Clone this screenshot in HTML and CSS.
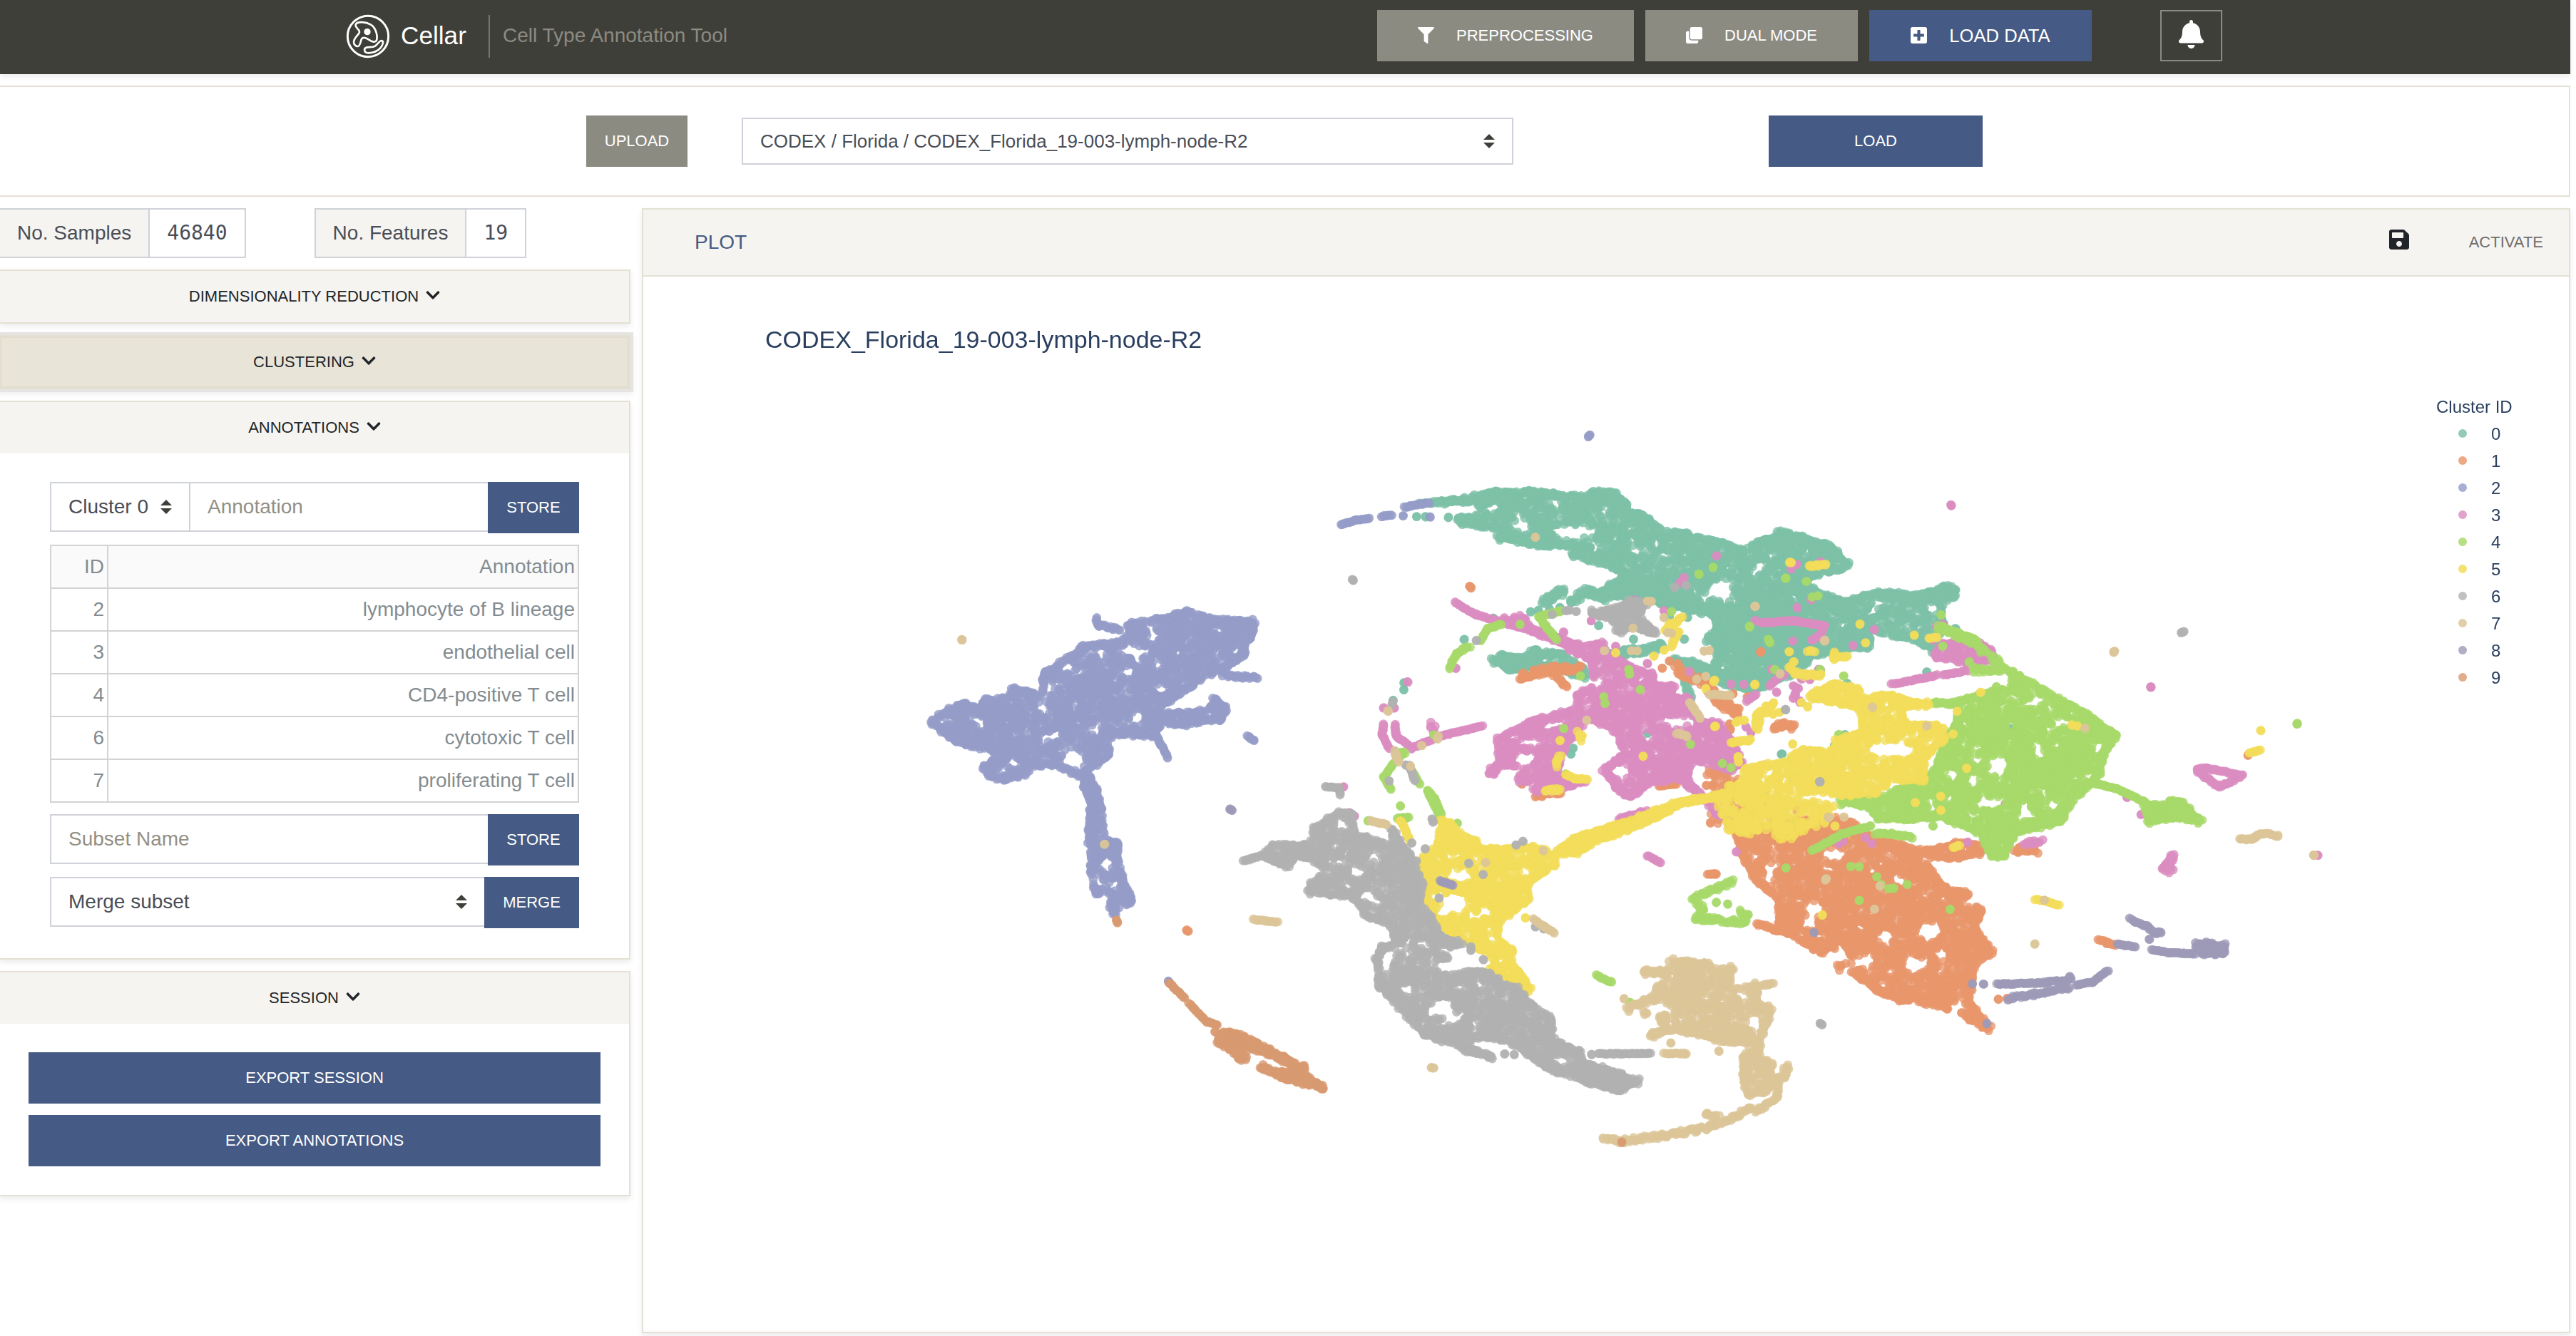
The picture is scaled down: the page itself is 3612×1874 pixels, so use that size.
FILE: index.html
```html
<!DOCTYPE html>
<html lang="en">
<head>
<meta charset="utf-8">
<title>Cellar</title>
<link rel="stylesheet" href="styles.css">
</head>
<body>
<svg class="defs" width="0" height="0">
  <symbol id="chevron" viewBox="0 0 448 512"><path d="M207.029 381.476L12.686 187.132c-9.373-9.373-9.373-24.569 0-33.941l22.667-22.667c9.357-9.357 24.522-9.375 33.901-.04L224 284.505l154.745-154.021c9.379-9.335 24.544-9.317 33.901.04l22.667 22.667c9.373 9.373 9.373 24.569 0 33.941L240.971 381.476c-9.373 9.372-24.569 9.372-33.942 0z"/></symbol>
  <symbol id="updown" viewBox="0 0 16 20"><path d="M8 0L16 8H0zM0 12H16L8 20z"/></symbol>
</svg>
<div class="app">
  <header class="navbar">
    <svg class="logo" viewBox="0 0 240 240" fill="none" stroke="#fff" stroke-linecap="round" stroke-linejoin="round">
      <circle cx="120" cy="117" r="86" stroke-width="9"/>
      <path stroke-width="8" d="M68 68C72 54 108 54 132 68C152 80 162 112 156 134C150 146 134 138 122 130C108 120 96 120 92 130C88 144 86 158 78 159C66 160 58 148 61 136C64 120 84 108 84 98C84 86 66 84 68 68Z"/>
      <path stroke-width="8" d="M112 164C124 160 138 166 150 158C162 148 170 134 178 135C188 138 182 154 172 166C160 180 140 186 122 187C102 187 102 168 112 164Z"/>
      <circle cx="117" cy="98" r="14" fill="#fff" stroke="none"/>
    </svg>
    <span class="brand">Cellar</span>
    <span class="tagline">Cell Type Annotation Tool</span>
    <nav class="actions">
      <button class="btn grey preprocessing"><svg viewBox="0 0 512 512"><path d="M487.976 0H24.028C2.71 0-8.047 25.866 7.058 40.971L192 225.941V432c0 7.831 3.821 15.17 10.237 19.662l80 55.98C298.02 518.69 320 507.493 320 487.98V225.941l184.947-184.97C520.021 25.896 509.338 0 487.976 0z"/></svg><span>PREPROCESSING</span></button>
      <button class="btn grey dual"><svg viewBox="0 0 512 512"><path d="M464 0c26.51 0 48 21.49 48 48v288c0 26.51-21.49 48-48 48H176c-26.51 0-48-21.49-48-48V48c0-26.51 21.49-48 48-48h288M176 416c-44.112 0-80-35.888-80-80V128H48c-26.51 0-48 21.49-48 48v288c0 26.51 21.49 48 48 48h288c26.51 0 48-21.49 48-48v-48H176z"/></svg><span>DUAL MODE</span></button>
      <button class="btn blue loaddata"><svg viewBox="0 32 448 448"><path d="M400 32H48C21.5 32 0 53.5 0 80v352c0 26.5 21.5 48 48 48h352c26.5 0 48-21.5 48-48V80c0-26.500-21.500-48-48-48zm-32 252c0 6.600-5.400 12-12 12h-92v92c0 6.600-5.400 12-12 12h-56c-6.600 0-12-5.400-12-12v-92H92c-6.600 0-12-5.400-12-12v-56c0-6.600 5.400-12 12-12h92v-92c0-6.600 5.400-12 12-12h56c6.600 0 12 5.400 12 12v92h92c6.600 0 12 5.400 12 12v56z"/></svg><span>LOAD DATA</span></button>
    </nav>
    <button class="btn bell"><svg viewBox="0 0 448 512"><path d="M224 512c35.320 0 63.970-28.650 63.970-64H160.030c0 35.350 28.650 64 63.970 64zm215.390-149.710c-19.320-20.760-55.470-51.990-55.470-154.290 0-77.700-54.480-139.900-127.940-155.160V32c0-17.670-14.320-32-31.980-32s-31.980 14.330-31.980 32v20.840C118.560 68.100 64.080 130.300 64.080 208c0 102.300-36.150 133.530-55.470 154.290-6 6.450-8.660 14.160-8.610 21.710.11 16.400 12.980 32 32.100 32h383.800c19.120 0 32-15.600 32.100-32 .05-7.550-2.610-15.270-8.610-21.710z"/></svg></button>
  </header>

  <section class="loader">
    <button class="btn grey upload">UPLOAD</button>
    <div class="select dataset"><span>CODEX / Florida / CODEX_Florida_19-003-lymph-node-R2</span><svg><use href="#updown"/></svg></div>
    <button class="btn blue load">LOAD</button>
  </section>

  <main class="columns">
    <aside class="sidebar">
      <div class="counts">
        <div class="count first"><span class="label">No. Samples</span><span class="value">46840</span></div>
        <div class="count"><span class="label">No. Features</span><span class="value">19</span></div>
      </div>
      <section class="card"><h2>DIMENSIONALITY REDUCTION<svg><use href="#chevron"/></svg></h2></section>
      <section class="card active"><h2>CLUSTERING<svg><use href="#chevron"/></svg></h2></section>
      <section class="card">
        <h2>ANNOTATIONS<svg><use href="#chevron"/></svg></h2>
        <div class="form">
          <div class="group">
            <div class="select cluster"><span>Cluster 0</span><svg><use href="#updown"/></svg></div>
            <div class="input joined">Annotation</div>
            <button class="btn blue">STORE</button>
          </div>
          <table>
            <tr><th class="id">ID</th><th>Annotation</th></tr>
            <tr><td>2</td><td>lymphocyte of B lineage</td></tr>
            <tr><td>3</td><td>endothelial cell</td></tr>
            <tr><td>4</td><td>CD4-positive T cell</td></tr>
            <tr><td>6</td><td>cytotoxic T cell</td></tr>
            <tr><td>7</td><td>proliferating T cell</td></tr>
          </table>
          <div class="group">
            <div class="input">Subset Name</div>
            <button class="btn blue">STORE</button>
          </div>
          <div class="group">
            <div class="select merge"><span>Merge subset</span><svg><use href="#updown"/></svg></div>
            <button class="btn blue wide">MERGE</button>
          </div>
        </div>
      </section>
      <section class="card">
        <h2>SESSION<svg><use href="#chevron"/></svg></h2>
        <div class="exports">
          <button class="btn blue">EXPORT SESSION</button>
          <button class="btn blue">EXPORT ANNOTATIONS</button>
        </div>
      </section>
    </aside>

    <section class="plot">
      <div class="plot-head">
        <span class="plot-name">PLOT</span>
        <svg class="save" viewBox="0 0 448 512"><path d="M433.941 129.941l-83.882-83.882A48 48 0 0 0 316.118 32H48C21.490 32 0 53.490 0 80v352c0 26.510 21.490 48 48 48h352c26.510 0 48-21.490 48-48V163.882a48 48 0 0 0-14.059-33.941zM224 416c-35.346 0-64-28.654-64-64 0-35.346 28.654-64 64-64s64 28.654 64 64c0 35.346-28.654 64-64 64zm96-304.520V212c0 6.627-5.373 12-12 12H76c-6.627 0-12-5.373-12-12V108c0-6.627 5.373-12 12-12h228.520c3.183 0 6.235 1.264 8.485 3.515l3.480 3.480A11.996 11.996 0 0 1 320 111.480z"/></svg>
        <span class="activate">ACTIVATE</span>
      </div>
      <div class="plot-body">
        <canvas id="scatter" width="2700" height="1480"></canvas>
        <div class="title">CODEX_Florida_19-003-lymph-node-R2</div>
        <div class="legend">
          <div class="legend-title">Cluster ID</div>
          <div class="item"><i class="c0"></i>0</div>
          <div class="item"><i class="c1"></i>1</div>
          <div class="item"><i class="c2"></i>2</div>
          <div class="item"><i class="c3"></i>3</div>
          <div class="item"><i class="c4"></i>4</div>
          <div class="item"><i class="c5"></i>5</div>
          <div class="item"><i class="c6"></i>6</div>
          <div class="item"><i class="c7"></i>7</div>
          <div class="item"><i class="c8"></i>8</div>
          <div class="item"><i class="c9"></i>9</div>
        </div>
      </div>
    </section>
  </main>
</div>
<script src="scatter.js"></script>
</body>
</html>
```

FILE: styles.css
```css
* { box-sizing: border-box; }
body { margin: 0; background: #fff; font: 28px "Liberation Sans", Arial, sans-serif; color: #212529; overflow: hidden; }
svg { display: block; fill: currentColor; }
.defs { position: absolute; }
.app { width: 3604px; height: 1874px; }

.btn { border: 0; border-radius: 0; height: 72px; padding: 0; font: 22px "Liberation Sans", Arial, sans-serif; color: #fff; display: flex; align-items: center; justify-content: center; flex: none; }
.grey { background: #8c8b82; }
.blue { background: #455a84; }

.navbar { height: 104px; padding: 0 488px 4px 476px; background: #3f3f3a; display: flex; align-items: center; box-shadow: 0 4px 8px rgba(0, 0, 0, .08); }
.logo { width: 80px; height: 80px; margin-top: 4px; fill: none; }
.brand { font-size: 35.2px; color: #fff; margin-left: 6px; width: 123px; }
.tagline { height: 60px; line-height: 58px; margin-top: 2px; padding-left: 18px; border-left: 2px solid #77766e; color: #8c8b82; white-space: nowrap; }
.actions { display: flex; gap: 16px; margin-left: auto; margin-right: 96px; }
.actions svg { width: 23px; height: 23px; margin-top: -2px; }
.preprocessing { width: 360px; gap: 31px; }
.dual { width: 298px; gap: 31px; }
.loaddata { width: 312px; font-size: 25.6px; gap: 31px; }
.bell { width: 87px; border: 2px solid #8c8b82; background: none; }
.bell svg { width: 35px; height: 40px; margin-top: -4px; }

.loader { margin-top: 16px; height: 156px; border: 2px solid #e4e1d4; border-left: 0; padding: 40px 0 0 822px; display: flex; align-items: flex-start; }
.upload { width: 142px; }
.select { border: 2px solid #cfd2d8; background: #fff; color: #4a4e57; display: flex; align-items: center; justify-content: space-between; padding: 0 24px; white-space: nowrap; }
.select svg { width: 16px; height: 20px; fill: #3f3f3a; flex: none; }
.dataset { width: 1082px; height: 66px; margin: 3px 358px 0 76px; font-size: 26px; }
.load { width: 300px; }

.columns { display: flex; gap: 16px; margin-top: 16px; align-items: flex-start; }
.sidebar { width: 884px; display: flex; flex-direction: column; gap: 16px; }
.counts { display: flex; gap: 96px; height: 70px; }
.count { display: flex; border: 2px solid #cfd2d8; line-height: 66px; color: #4a4e57; }
.count.first { border-left: 0; }
.label { background: #f6f4f0; padding: 0 24px; border-right: 2px solid #cfd2d8; }
.value { padding: 0 24px; font-family: "DejaVu Sans Mono", monospace; }
.card { border: 2px solid #e4e1d4; border-left: 0; background: #fff; box-shadow: 0 4px 8px rgba(0, 0, 0, .08); }
.card h2 { margin: 0; height: 72px; background: #f6f4f0; font-size: 22px; font-weight: 400; display: flex; align-items: center; justify-content: center; gap: 10px; }
.card h2 svg { width: 20px; height: 22px; margin-top: -4px; }
.card.active { height: 76px; box-shadow: 0 0 0 4px #e5e4e2, 0 4px 8px 4px rgba(0, 0, 0, .06); }
.card.active h2 { background: #e8e4d8; border: 2px solid #e2ddcd; }

.form { padding: 40px 70px 42px; display: flex; flex-direction: column; gap: 16px; }
.group { display: flex; align-items: flex-start; height: 72px; }
.group .btn { width: 128px; }
.group .btn.wide { width: 133px; }
.group .select, .input { height: 70px; }
.cluster { width: 197px; }
.merge { flex: 1; border-right: 0; padding-right: 24px; }
.input { flex: 1; border: 2px solid #cfd2d8; border-right: 0; line-height: 66px; padding-left: 24px; color: #938f85; }
.input.joined { border-left: 0; padding-left: 24px; }

table { width: 742px; border-collapse: collapse; table-layout: fixed; color: #848c90; }
th, td { height: 60px; border: 2px solid #d3d3d3; padding: 0 4px 0 0; text-align: right; font-weight: 400; }
th { background: #fafafa; }
th.id { width: 80px; }

.exports { padding: 40px 42px 40px 40px; display: flex; flex-direction: column; gap: 16px; }
.exports .btn { height: 72px; width: 802px; }

.plot { width: 2704px; height: 1578px; border: 2px solid #e4e1d4; box-shadow: 0 4px 8px rgba(0, 0, 0, .08); }
.plot-head { height: 94px; border-bottom: 2px solid #e4e1d4; background: #f6f4f0; display: flex; align-items: center; padding: 0 36px 0 72px; }
.plot-name { color: #455a84; }
.save { width: 28px; height: 32px; margin: -9px 84px 0 auto; color: #212529; }
.activate { font-size: 22px; color: #6f6e6b; }
.plot-body { position: relative; height: 1480px; }
.plot-body canvas { display: block; }
.title { position: absolute; left: 171px; top: 66px; font-size: 34px; line-height: 44px; color: #2a3f5f; white-space: nowrap; }
.legend { position: absolute; left: 2514px; top: 164px; font-size: 24px; color: #2a3f5f; }
.legend-title, .item { height: 38px; line-height: 38px; white-space: nowrap; }
.item { display: flex; align-items: center; padding-left: 31px; gap: 34px; }
.item i { width: 12px; height: 12px; border-radius: 6px; margin-top: -2px; }
.c0 { background: #93cbb6; }
.c1 { background: #eda884; }
.c2 { background: #a9afd3; }
.c3 { background: #e1a3cb; }
.c4 { background: #b7df83; }
.c5 { background: #f3e272; }
.c6 { background: #c1c1c1; }
.c7 { background: #e1cfaa; }
.c8 { background: #b0adc5; }
.c9 { background: #e0ac8b; }
```

FILE: scatter.js
```js
// Draws the embedding: every cluster is a set of areas, trails and single cells.
const ctx = document.getElementById('scatter').getContext('2d');
ctx.translate(-902, -388);

const R = 6.3;
const colors = ['#7dc0a8', '#e9966b', '#959cc8', '#db8dc0', '#a8d96a',
                '#f2dd5a', '#b2b2b2', '#dcc698', '#9e9ab8', '#d89a70'];

// Each tile of the embedding has its own origin and units per pixel.
const tiles = {
  A: [1260, 560, 1.96, 1.96],
  B: [1800, 560, 1.96, 2.613],
  C: [2400, 640, 1.742, 1.823],
  D: [1600, 1040, 1.568, 2.529]
};

let seed = 12345;
function rnd() {
  seed = (seed * 1664525 + 1013904223) >>> 0;
  return seed / 4294967296;
}

function points(tile, text) {
  const [ox, oy, sx, sy] = tiles[tile];
  return text.trim().split(/\s+/).map(p => {
    const [u, v] = p.split(',').map(Number);
    return [ox + u / sx, oy + v / sy];
  });
}

let color = 0;
function dot(x, y) {
  ctx.globalAlpha = 0.8;
  ctx.fillStyle = colors[color];
  ctx.beginPath();
  ctx.arc(x, y, R, 0, Math.PI * 2);
  ctx.fill();
}

function inside(poly, x, y) {
  let hit = false;
  for (let i = 0, j = poly.length - 1; i < poly.length; j = i++) {
    const [xi, yi] = poly[i], [xj, yj] = poly[j];
    if ((yi > y) !== (yj > y) && x < (xj - xi) * (y - yi) / (yj - yi) + xi) hit = !hit;
  }
  return hit;
}

// spacing: px² per cell; holes: "x,y,rx,ry" in tile units
function area(tile, text, spacing = 30, holes = '') {
  const poly = points(tile, text);
  const [ox, oy, sx, sy] = tiles[tile];
  const gaps = holes.trim() ? holes.trim().split(/\s+/).map(h => {
    const [u, v, a, b] = h.split(',').map(Number);
    return [ox + u / sx, oy + v / sy, a / sx + 4, b / sy + 4];
  }) : [];
  const blocked = (x, y) => gaps.some(g => ((x - g[0]) / g[2]) ** 2 + ((y - g[1]) / g[3]) ** 2 < 1);
  const xs = poly.map(p => p[0]), ys = poly.map(p => p[1]);
  const x0 = Math.min(...xs), x1 = Math.max(...xs), y0 = Math.min(...ys), y1 = Math.max(...ys);
  const n = (x1 - x0) * (y1 - y0) / spacing;
  const e = 4;
  for (let i = 0; i < n; i++) {
    const x = x0 + rnd() * (x1 - x0), y = y0 + rnd() * (y1 - y0);
    if (!inside(poly, x - e, y) || !inside(poly, x + e, y) ||
        !inside(poly, x, y - e) || !inside(poly, x, y + e) || blocked(x, y)) continue;
    dot(x, y);
  }
  if (spacing > 45) return;
  // dense areas have a closed rim
  for (let i = 0; i < poly.length; i++) {
    const [xa, ya] = poly[i], [xb, yb] = poly[(i + 1) % poly.length];
    const len = Math.hypot(xb - xa, yb - ya);
    if (!len) continue;
    let nx = -(yb - ya) / len, ny = (xb - xa) / len;
    if (!inside(poly, (xa + xb) / 2 + nx * 3, (ya + yb) / 2 + ny * 3)) { nx = -nx; ny = -ny; }
    for (let d = 2; d < len - 1; d += 3.5) {
      const off = 5.5 + rnd() * 2.5;
      const x = xa + (xb - xa) * d / len + nx * off, y = ya + (yb - ya) * d / len + ny * off;
      if (rnd() < .85 && inside(poly, x, y) && !blocked(x, y)) dot(x, y);
    }
  }
}

// A narrow band of cells, width in px
function trail(tile, text, width = 14) {
  const line = points(tile, text);
  const s = Math.max(1.5, width + 2.5 - 2 * R);
  for (let i = 1; i < line.length; i++) {
    const [xa, ya] = line[i - 1], [xb, yb] = line[i];
    const n = Math.ceil(Math.hypot(xb - xa, yb - ya) / (s > 6 ? 1.1 : 2.2));
    for (let k = 0; k <= n; k++) {
      const t = k / n;
      dot(xa + (xb - xa) * t + (rnd() - .5) * s, ya + (yb - ya) * t + (rnd() - .5) * s);
    }
  }
}

function cells(tile, text) {
  points(tile, text).forEach(([x, y]) => { dot(x, y); dot(x + rnd() * 2 - 1, y + rnd() * 2 - 1); });
}

// ---- cluster 0
color = 0;
area('B', '375,385 480,355 560,325 690,322 830,345 840,325 905,322 955,380 955,405 985,408 1050,468 1100,473 1130,492 1190,502 1270,540 1300,505 1345,495 1355,468 1440,493 1510,528 1565,605 1548,632 1480,652 1440,670 1450,720 1500,740 1500,930 1400,960 1340,1060 1280,1080 1190,1050 1100,990 1040,940 1120,945 1230,1000 1260,960 1150,880 1190,830 1140,770 1100,750 1000,740 930,730 870,750 860,700 920,640 870,620 830,600 780,575 800,550 720,555 640,535 575,515 590,490 480,468 472,425 540,410 520,390',
  24, '800,485,60,12 650,460,25,5 1200,700,28,28 1050,573,18,5 1310,615,8,18 570,400,20,5 970,555,12,5 1410,725,8,6 1180,920,25,14 745,378,8,8');
area('B', '880,690 960,660 1100,690 1170,790 1130,790 1060,770 990,745 900,735', 26);
area('B', '1420,650 1480,700 1568,735 1568,780 1440,780 1390,700', 34);
trail('B', '715,740 770,705', 20);
trail('B', '790,745 830,705 880,720', 20);
area('B', '560,960 600,922 660,930 690,900 720,915 770,915 800,950 830,970 840,1025 800,1025 700,990 620,1010', 30);
trail('B', '880,945 960,925 1040,905', 20);
trail('B', '1095,1000 1110,1060 1120,1110', 16);
cells('B', '865,830 962,880 497,880 577,803 700,775 680,780 730,770 760,765 330,1040 330,1065 300,1105 305,1290 790,1300 795,1280 365,430 390,432 453,432 480,435 1100,880 1370,1300 1000,1225 1130,1435 1110,800 930,640 1060,800 1045,745');
trail('B', '375,383 480,370', 13);
area('C', '240,345 310,370 360,350 410,335 500,345 580,320 607,340 600,370 572,382 575,430 550,510 480,475 400,460 390,500 330,500 250,520 200,570 120,600 50,580 0,560 0,380 240,380', 30,
  '68,440,12,22 240,400,6,8 410,375,12,4 540,395,8,5 30,470,10,6');
cells('C', '730,697 170,762 300,740 325,712 330,580 595,440 525,552');

// ---- cluster 1
color = 1;
area('C', '50,965 150,930 200,920 340,925 390,960 470,985 520,1000 610,975 667,990 667,1022 600,1037 530,1037 580,1100 625,1103 670,1165 650,1200 697,1270 650,1312 640,1390 690,1465 670,1475 600,1432 500,1402 460,1402 400,1375 350,1335 298,1312 305,1295 340,1285 310,1250 270,1282 200,1240 155,1217 155,1140 100,1090 65,1020',
  24, '300,1020,24,12 425,1230,14,14 530,1215,24,18 250,1158,20,12 495,1300,22,16 600,1408,18,6 150,1050,18,3 330,1310,10,4 560,1065,12,6 635,1140,12,6 460,1085,12,6 370,1290,24,6 560,1275,12,10 240,1195,14,10');
trail('C', '740,1005 795,1007', 19);
trail('C', '110,1195 165,1215', 14);
trail('C', '270,1242 300,1258', 12);
area('C', '143,690 170,670 205,680 207,700 150,705', 20);
cells('C', '0,1068 10,1068 120,500 1310,765 700,1388 722,1386 965,1245');
trail('C', '945,1235 985,1250', 11);
area('C', '0,780 60,800 120,860 60,900 0,880', 80);
trail('B', '650,1018 740,988 815,985', 19);
trail('B', '740,1005 780,1055', 14);
trail('B', '1075,990 1150,1030 1200,1110 1250,1150', 20);
cells('B', '1040,985 1060,960 1083,970 1225,1190 1228,1210 1235,1080 1275,1090 1310,928 512,686 515,690 655,1410');
area('B', '1150,1340 1230,1340 1265,1400 1220,1440 1150,1440', 46);
trail('B', '1030,1418 1080,1410', 12);
trail('B', '690,1455 765,1440', 14);
area('D', '1230,160 1330,180 1440,200 1568,280 1568,380 1400,380 1300,320 1240,300', 100);
trail('D', '1245,470 1265,470', 11);
cells('D', '1252,290 100,670 104,673');

// ---- cluster 2
color = 2;
area('A', '80,888 118,850 175,824 215,835 240,813 295,808 310,780 385,800 388,745 420,728 505,668 600,658 620,640 622,608 740,588 790,570 870,595 930,595 985,602 982,655 962,670 962,712 905,745 830,782 770,828 720,855 800,848 845,845 868,810 914,848 892,890 780,908 735,900 700,937 620,935 590,930 585,990 530,1025 500,1050 440,1022 400,1015 370,1022 350,1042 290,1059 245,1047 218,1010 265,977 190,964 130,937',
  22, '222,885,12,6 465,738,14,7 645,695,30,9 632,752,10,8 655,880,14,9 480,990,22,18 320,1000,12,5 720,805,7,18 430,925,12,8 395,850,14,6 695,625,7,3 880,635,8,3 120,888,6,5 415,795,5,10 290,1020,8,3 540,910,6,3');
trail('A', '540,605 545,618 605,632', 15);
trail('A', '890,755 920,762 985,767', 15);
trail('A', '700,910 740,985', 11);
trail('A', '640,770 720,820 760,800', 11);
area('A', '495,1020 535,1030 555,1075 572,1140 578,1200 615,1215 614,1270 632,1330 652,1380 640,1400 610,1398 590,1440 573,1400 528,1360 518,1300 518,1240 508,1210 515,1120 498,1060',
  22, '572,1275,12,14 595,1330,6,6 566,1375,7,7 550,1325,5,4');
trail('A', '957,925 978,938', 13);
trail('A', '1215,345 1255,333 1295,327', 10);
trail('A', '1328,322 1355,318', 10);
trail('A', '1390,297 1458,285', 11);
cells('A', '1387,320 1460,323');
cells('B', '837,138 841,132');
cells('D', '60,850 62,857');

// ---- cluster 3
color = 3;
area('B', '590,800 655,778 690,830 760,860 820,890 885,880 895,920 940,955 990,985 1027,1000 1022,1040 1080,1035 1078,1080 1120,1080 1135,1160 1200,1175 1250,1260 1270,1340 1230,1375 1130,1340 1120,1390 1150,1445 1125,1445 1080,1405 1010,1420 960,1468 930,1465 895,1410 865,1350 925,1300 900,1220 840,1185 800,1250 775,1300 765,1380 845,1390 800,1432 720,1455 680,1445 680,1415 635,1405 645,1360 610,1355 570,1390 553,1360 583,1330 575,1240 680,1160 795,1125 795,1080 840,1040 835,960 790,935 740,895 680,865 600,830',
  22, '925,1362,22,18 680,1258,30,9 660,1320,22,20 740,1195,14,9 1080,1180,40,10 1000,1230,6,6 870,1030,8,4');
trail('B', '470,745 530,790 600,818 680,845 770,895', 12);
trail('B', '275,1190 270,1230 290,1280', 11);
trail('B', '305,1190 310,1235 345,1270', 12);
trail('B', '350,1280 420,1240 545,1197', 12);
trail('B', '405,1190 415,1215', 16);
trail('B', '1110,1400 1200,1530', 14);
trail('B', '920,1540 1000,1510', 14);
trail('B', '1310,820 1400,812 1485,830 1475,865 1450,885', 12);
trail('B', '1270,1105 1300,1085', 13);
trail('B', '1335,1050 1360,1020', 11);
cells('B', '473,985 340,1035 275,1130 303,1132 165,1420 180,1515 195,1528 770,855 845,812 1190,573 1100,655 1090,672 965,735 1045,775 1410,605 1395,620 1475,595 1450,735 1412,765 1400,885 1295,810 1230,1045 1265,1045 1355,1075 1400,1050 1405,1080 1420,1110 1470,990 1340,990 1440,1010 1115,1000 912,905 1000,970 1270,1200 1285,1220 1320,1340 1400,1095 1415,1060 1375,1010');
area('C', '535,500 560,470 640,458 692,490 702,530 620,537 540,522', 22);
trail('C', '440,583 550,560', 12);
trail('C', '565,560 625,548', 10);
trail('C', '1185,805 1240,845 1295,818', 14);
trail('C', '1185,800 1210,797 1295,816', 12);
area('C', '1092,1060 1132,1005 1128,1070', 12);
trail('C', '1100,1055 1130,1020', 12);
cells('C', '585,125 586,126 1072,590 1073,591 550,435 565,430 310,990 320,985 375,975 392,990 625,988 60,1012 345,483 398,443 1015,873 1050,915 1480,1020 540,470 718,890 205,590 205,610 215,625 240,570 265,545 220,570');
trail('C', '765,990 805,985', 16);
trail('D', '1113,405 1143,430', 11);

// ---- cluster 4
color = 4;
area('C', '550,430 600,438 650,458 672,500 720,530 800,580 900,638 960,680 1000,715 985,742 967,765 957,815 930,852 892,880 862,942 800,960 747,972 720,1033 680,1033 650,972 560,932 500,938 400,938 380,905 300,890 320,868 420,860 480,830 540,800 555,740 580,690 600,645 538,642 540,618 600,618 690,588 730,588 720,562 632,552 630,540 700,535 640,490 550,450',
  22, '700,790,18,17 680,888,32,10 945,745,8,8 730,690,5,8 860,680,16,6 640,832,12,4 770,918,14,8 650,780,6,8 590,815,12,6 800,625,10,4 800,760,6,4 840,890,5,5');
trail('C', '555,435 600,452 640,470 665,500', 13);
trail('C', '930,835 990,850 1060,885', 11);
area('C', '1045,880 1110,880 1115,870 1145,870 1200,922 1200,945 1130,935 1060,945', 16);
trail('C', '245,1008 320,965 390,945', 12);
trail('C', '400,965 440,965 490,975', 13);
cells('C', '1430,685 1431,684 181,1053 340,1048 360,1050 403,1075 415,1095 432,1106 445,1104 477,1094 360,1136 583,1158 181,312 232,320 245,360 260,357 92,435 138,468 143,477 560,405 322,562 155,545 205,940 225,945 630,525 695,525 565,485 695,590 310,712 540,945 265,545');
trail('D', '1303,495 1215,555 1235,595 1220,635', 15);
trail('D', '1230,628 1330,642 1320,600', 16);
cells('D', '1265,570 1290,578 1335,615 570,228 1075,925 500,280 695,290');
trail('D', '1000,828 1035,855', 12);
trail('D', '565,275 590,268', 13);
trail('D', '630,175 645,200 660,260', 10);
trail('B', '455,985 475,930 510,905', 13);
trail('B', '540,885 560,840 600,825', 12);
trail('B', '765,775 700,797 725,840 750,880', 12);
trail('B', '315,1300 335,1300', 17);
trail('B', '305,1330 275,1385 295,1430', 11);
trail('B', '350,1360 375,1410', 10);
trail('B', '395,1435 430,1530', 10);
cells('B', '1180,615 1142,642 1380,655 650,825 880,1090 883,1115 948,990 950,1008 980,1065 770,1207 1118,1265 1230,1350 1205,1335 1065,780 1280,832 1335,888 815,1015 412,1230 775,1375 1475,1000 1325,1450');

// ---- cluster 5
color = 5;
area('C', '235,600 300,570 370,588 372,612 430,598 470,612 537,625 535,645 470,650 480,675 555,678 582,725 530,770 528,838 440,838 400,872 330,878 260,862 200,872 150,855 90,872 65,830 75,790 180,768 220,738 290,745 310,715 355,705 358,655 300,640 235,625',
  24, '440,750,54,17 340,670,12,25 200,850,8,4 140,810,10,5');
area('C', '0,875 100,835 200,872 310,885 290,940 220,980 180,1005 140,960 70,982 15,945', 52);
trail('C', '190,540 215,560 270,560', 16);
trail('C', '235,497 250,500', 13);
trail('C', '295,512 330,512', 13);
trail('C', '300,500 300,520', 9);
trail('C', '530,465 550,462', 11);
trail('C', '150,632 115,660 110,695', 17);
trail('C', '300,730 350,715', 16);
trail('C', '590,1000 605,995', 11);
trail('C', '790,1133 820,1138 848,1148', 11);
trail('C', '1312,760 1340,750', 11);
trail('C', '237,282 280,277', 13);
cells('C', '190,500 200,525 362,430 376,477 658,603 600,652 590,710 565,695 880,688 893,690 623,797 560,870 560,905 498,886 270,1174 1342,702 190,272 195,272 495,458 8,690 52,733 65,770 198,735 105,585 5,575 80,675 70,728 135,655 150,660 165,655 220,630 235,640 90,728 60,680');
trail('B', '815,1220 818,1245', 19);
trail('B', '760,1305 748,1345', 14);
trail('B', '775,1375 800,1390 835,1395', 12);
trail('B', '718,1435 758,1430', 14);
trail('B', '1095,800 1050,845 1085,855 1065,905', 13);
trail('B', '1230,1258 1285,1248', 12);
cells('B', '760,1250 988,1308 1187,1198 1250,1310 1250,1330 912,930 1017,942 1045,920 1160,1060 1185,1030 1295,1045 1060,820 1250,1178');
area('D', '600,420 640,375 655,265 690,275 700,310 740,340 750,365 780,365 860,360 905,380 960,320 1010,300 1090,255 1180,200 1290,175 1300,195 1195,232 1105,310 1010,362 960,410 920,415 918,445 885,480 858,512 862,568 800,640 790,690 825,735 820,770 855,845 862,890 840,895 815,860 760,820 770,775 730,740 680,700 655,660 630,610 610,600 615,520',
  25, '685,580,22,22 665,610,12,10 700,480,25,14 650,550,10,10 735,620,12,6 845,460,8,10 700,545,14,8 760,600,6,3');
trail('D', '640,510 720,540 780,470', 12);
trail('D', '1000,320 1090,285 1180,218 1290,190', 13);
trail('D', '570,280 580,310 590,350', 11);
cells('D', '845,625 850,880 560,450 565,475 1450,300 1525,300');
area('D', '1290,130 1400,140 1568,170 1568,200 1500,260 1450,340 1400,380 1380,330 1310,330 1260,270', 65);

// ---- cluster 6
color = 6;
area('D', '265,400 285,350 350,355 370,345 372,300 400,272 430,235 470,245 480,320 540,345 550,290 570,330 600,400 608,440 630,500 620,580 640,600 665,680 712,705 700,735 650,735 705,770 720,798 770,808 800,850 830,860 858,915 912,980 912,1050 930,1065 975,1090 975,1125 1040,1155 1108,1205 1055,1255 980,1225 900,1180 850,1125 800,1075 750,1065 720,1065 790,1120 770,1135 710,1110 690,1090 620,1055 570,965 513,870 513,820 506,770 525,715 550,710 540,655 490,635 460,562 400,555 362,545 365,495 400,460 370,430 340,420 325,460 290,435',
  25, '475,465,10,12 498,545,14,12 440,290,10,10 537,780,7,26 660,945,18,26 685,985,16,10 765,1078,30,12 588,885,8,12 680,795,32,14 625,715,3,8 515,410,8,6 700,870,10,5 920,1130,14,6');
trail('D', '225,425 265,405 320,440', 12);
trail('D', '1005,1108 1120,1107', 10);
trail('D', '405,160 435,165 438,190', 10);
cells('D', '640,275 643,285 625,380 605,425 720,432 752,472 655,555 840,355 825,368 725,730 725,742 753,775 1493,143 1493,1000 1497,1004 885,665 867,658 990,1110 800,1108 820,1110 920,1070 922,1080 595,360 600,470 670,700 680,730');
area('B', '830,775 920,750 950,722 1010,735 988,795 1032,850 1022,878 960,848 915,868 905,825 840,795', 18);
cells('B', '190,662 191,663 775,775 785,773 803,778 738,788 1075,690 1107,683 530,885 290,1400 300,1110 297,1120 1380,1138 1473,1403 335,1340');
trail('B', '345,1340 360,1400', 10);
cells('C', '1148,450 1154,448 265,832 180,648');

// ---- cluster 7
color = 7;
area('D', '1100,800 1160,795 1158,762 1240,768 1262,788 1308,795 1302,860 1362,850 1365,925 1392,935 1388,990 1372,1050 1367,1110 1400,1140 1432,1145 1427,1195 1407,1212 1372,1262 1330,1268 1315,1210 1315,1110 1340,1085 1280,1080 1230,1055 1170,1038 1120,1060 1112,1030 1140,1010 1130,975 1090,975 1110,940 1060,968 1065,930 1120,890 1140,840 1100,832',
  24, '1350,990,10,14 1135,948,22,16 1400,1170,5,10 1325,905,8,10 1370,900,10,5');
trail('D', '1370,865 1390,860', 13);
trail('D', '1400,1215 1398,1265 1350,1315', 14);
trail('D', '1345,1295 1300,1335 1250,1370 1180,1390 1060,1418 1015,1410', 16);
trail('D', '1240,1320 1270,1330', 16);
trail('D', '1150,1107 1200,1107', 12);
trail('D', '247,632 300,640', 11);
trail('D', '505,282 540,295', 11);
trail('D', '862,630 908,680', 11);
cells('D', '1165,1070 1270,1098 638,1157 644,1158 757,430 1505,490 1512,270 1062,912 885,388');
cells('A', '174,661 175,662 565,1224 1345,857');
cells('B', '692,506 1000,740 1010,742 1295,760 1055,855 1065,857 960,840 882,922 955,922 972,922 1155,922 1170,922 425,1235 422,1245 380,1270 348,1345 833,1177 1135,1025 1160,1015 1485,885 1045,800 287,1143');
trail('B', '305,1290 315,1330', 12);
trail('B', '1080,1225 1110,1235', 13);
trail('B', '1115,1110 1145,1170', 11);
trail('B', '1170,1082 1230,1085', 12);
trail('C', '1290,977 1320,980 1340,965 1385,970', 13);
cells('C', '982,500 983,499 789,1248 1471,1020 1471,1021 392,641 525,690 280,1080 398,1158 412,1098 276,470 106,383 813,1135 167,557 912,695 285,922 323,922');

// ---- cluster 8
color = 8;
cells('A', '911,1126 915,1129');
trail('A', '1488,1325 1525,1336', 12);
trail('C', '1022,1183 1060,1200 1085,1220 1100,1216', 13);
trail('C', '990,1247 1035,1254', 11);
trail('C', '1075,1262 1120,1270 1180,1272', 11);
area('C', '1170,1245 1210,1233 1265,1245 1258,1280 1195,1285', 14);
trail('C', '697,1350 770,1348', 12);
trail('C', '770,1350 880,1338', 13);
trail('C', '725,1386 790,1375 870,1358', 15);
trail('C', '890,1352 930,1345 968,1315', 11);
cells('C', '1070,1235 637,1348 665,1350 673,1450 250,1218 875,1330');

// ---- cluster 9
color = 9;
trail('D', '62,857 95,910', 11);
trail('D', '105,930 145,995 168,1005', 12);
area('D', '160,1040 180,1015 215,1025 280,1075 368,1150 362,1172 382,1190 410,1225 402,1245 350,1225 310,1212 265,1170 245,1135 310,1160 330,1160 270,1118 225,1095 243,1130 215,1145 192,1100 160,1078', 13);
cells('D', '162,1030 1057,1420');
cells('A', '598,1432 602,1438');
```
